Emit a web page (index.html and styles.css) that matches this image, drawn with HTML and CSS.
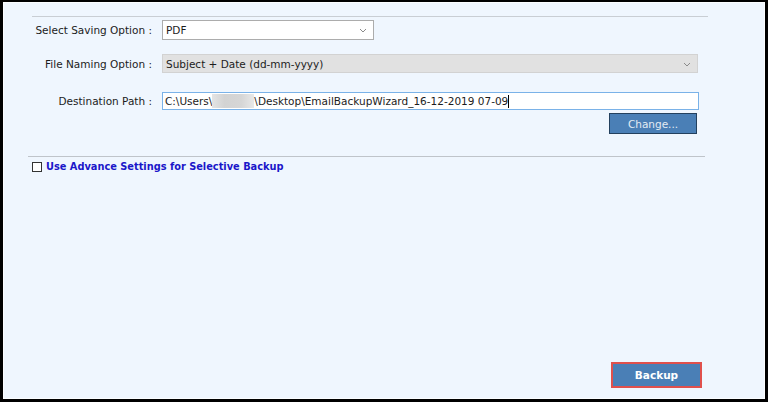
FILE: index.html
```html
<!DOCTYPE html>
<html lang="en">
<head>
  <meta charset="UTF-8">
  <title>Email Backup Wizard</title>
  <link rel="stylesheet" href="styles.css">
</head>
<body>
  <div class="frame">
    <div class="panel">
      <hr class="rule rule-top">

      <div class="field-row row-saving">
        <label class="field-label">Select Saving Option :</label>
        <div class="select select-small">
          <span class="select-value">PDF</span>
          <svg class="chevron" width="8" height="5" viewBox="0 0 8 5"><path d="M1 1 L4 4 L7 1" fill="none" stroke="#8a8a8a" stroke-width="1"/></svg>
        </div>
      </div>

      <div class="field-row row-naming">
        <label class="field-label">File Naming Option :</label>
        <div class="select select-wide select-disabled">
          <span class="select-value">Subject + Date (dd-mm-yyyy)</span>
          <svg class="chevron" width="8" height="5" viewBox="0 0 8 5"><path d="M1 1 L4 4 L7 1" fill="none" stroke="#8a8a8a" stroke-width="1"/></svg>
        </div>
      </div>

      <div class="field-row row-path">
        <label class="field-label">Destination Path :</label>
        <div class="text-input">C:\Users\<span class="blurred"></span>\Desktop\EmailBackupWizard_16-12-2019 07-09<span class="caret"></span></div>
      </div>

      <div class="change-row">
        <button class="btn btn-change">Change...</button>
      </div>

      <hr class="rule rule-mid">

      <div class="advance-row">
        <span class="checkbox"></span>
        <span class="advance-label">Use Advance Settings for Selective Backup</span>
      </div>

      <div class="footer">
        <button class="btn btn-backup">Backup</button>
      </div>
    </div>
  </div>
</body>
</html>
```

FILE: styles.css
```css
* {
  margin: 0;
  padding: 0;
  box-sizing: border-box;
  font-family: 'DejaVu Sans', Verdana, sans-serif;
}

:root {
  --bg: #eff6fe;
  --text: #1c1c1c;
  --border: #acacac;
  --rule: #c9ced4;
  --btn-blue: #4a7fb6;
  --link: #1a17c9;
}

body {
  width: 768px;
  height: 402px;
  background: #000;
  overflow: hidden;
}

.frame {
  width: 768px;
  height: 402px;
  border-style: solid;
  border-color: #000;
  border-width: 2px 3px 3px 3px;
}

.panel {
  height: 100%;
  background: var(--bg);
  box-shadow: inset 0 0 0 1px #fbfdff;
  display: flex;
  flex-direction: column;
  font-size: 10.5px;
  color: var(--text);
}

.rule {
  border: none;
  height: 1px;
  background: var(--rule);
}

.rule-top {
  margin: 14px 57px 0 29px;
}

.rule-mid {
  margin: 22px 60px 0 25px;
  background: #bfc4ca;
}

.field-row {
  display: flex;
  align-items: center;
  gap: 10px;
}

.row-saving { margin-top: 3px; }
.row-naming { margin-top: 14px; }
.row-path { margin-top: 19px; }

.field-label {
  width: 149px;
  text-align: right;
  white-space: nowrap;
}

.select {
  display: flex;
  align-items: center;
  justify-content: space-between;
  background: #fff;
  border: 1px solid var(--border);
  padding: 0 6px 0 3px;
}

.select-small {
  width: 212px;
  height: 20px;
}

.select-wide {
  width: 536px;
  height: 19px;
}

.select-disabled {
  background: #e1e1e1;
  border-color: #d2d2d2;
}

.chevron {
  margin-top: 1px;
}

.text-input {
  width: 537px;
  height: 18px;
  background: #fff;
  border: 1px solid #7ab2e8;
  padding: 0 2px;
  display: flex;
  align-items: center;
  white-space: nowrap;
}

.blurred {
  display: inline-block;
  width: 42px;
  height: 14px;
  background: linear-gradient(90deg, #e4e4e4, #d3d3d3 30%, #d6d6d6 70%, #e8e8e8);
}

.caret {
  display: inline-block;
  width: 1px;
  height: 13px;
  background: #000;
}

.change-row {
  display: flex;
  justify-content: flex-end;
  margin: 3px 68px 0 0;
}

.btn {
  border: none;
  cursor: pointer;
  background: var(--btn-blue);
  font-size: 10.5px;
}

.btn-change {
  width: 88px;
  height: 21px;
  border: 1px solid #23405e;
  color: #e3ebf3;
}

.advance-row {
  display: flex;
  align-items: center;
  gap: 4px;
  margin: 4px 0 0 29px;
}

.checkbox {
  width: 10px;
  height: 10px;
  border: 1px solid #333;
  background: #fff;
}

.advance-label {
  color: var(--link);
  font-weight: bold;
  font-size: 9.8px;
}

.footer {
  margin-top: auto;
  display: flex;
  justify-content: flex-end;
  padding: 0 63px 11px 0;
}

.btn-backup {
  width: 91px;
  height: 26px;
  border: 2px solid #e0504c;
  color: #fff;
  font-weight: bold;
  font-size: 10.5px;
}
```
